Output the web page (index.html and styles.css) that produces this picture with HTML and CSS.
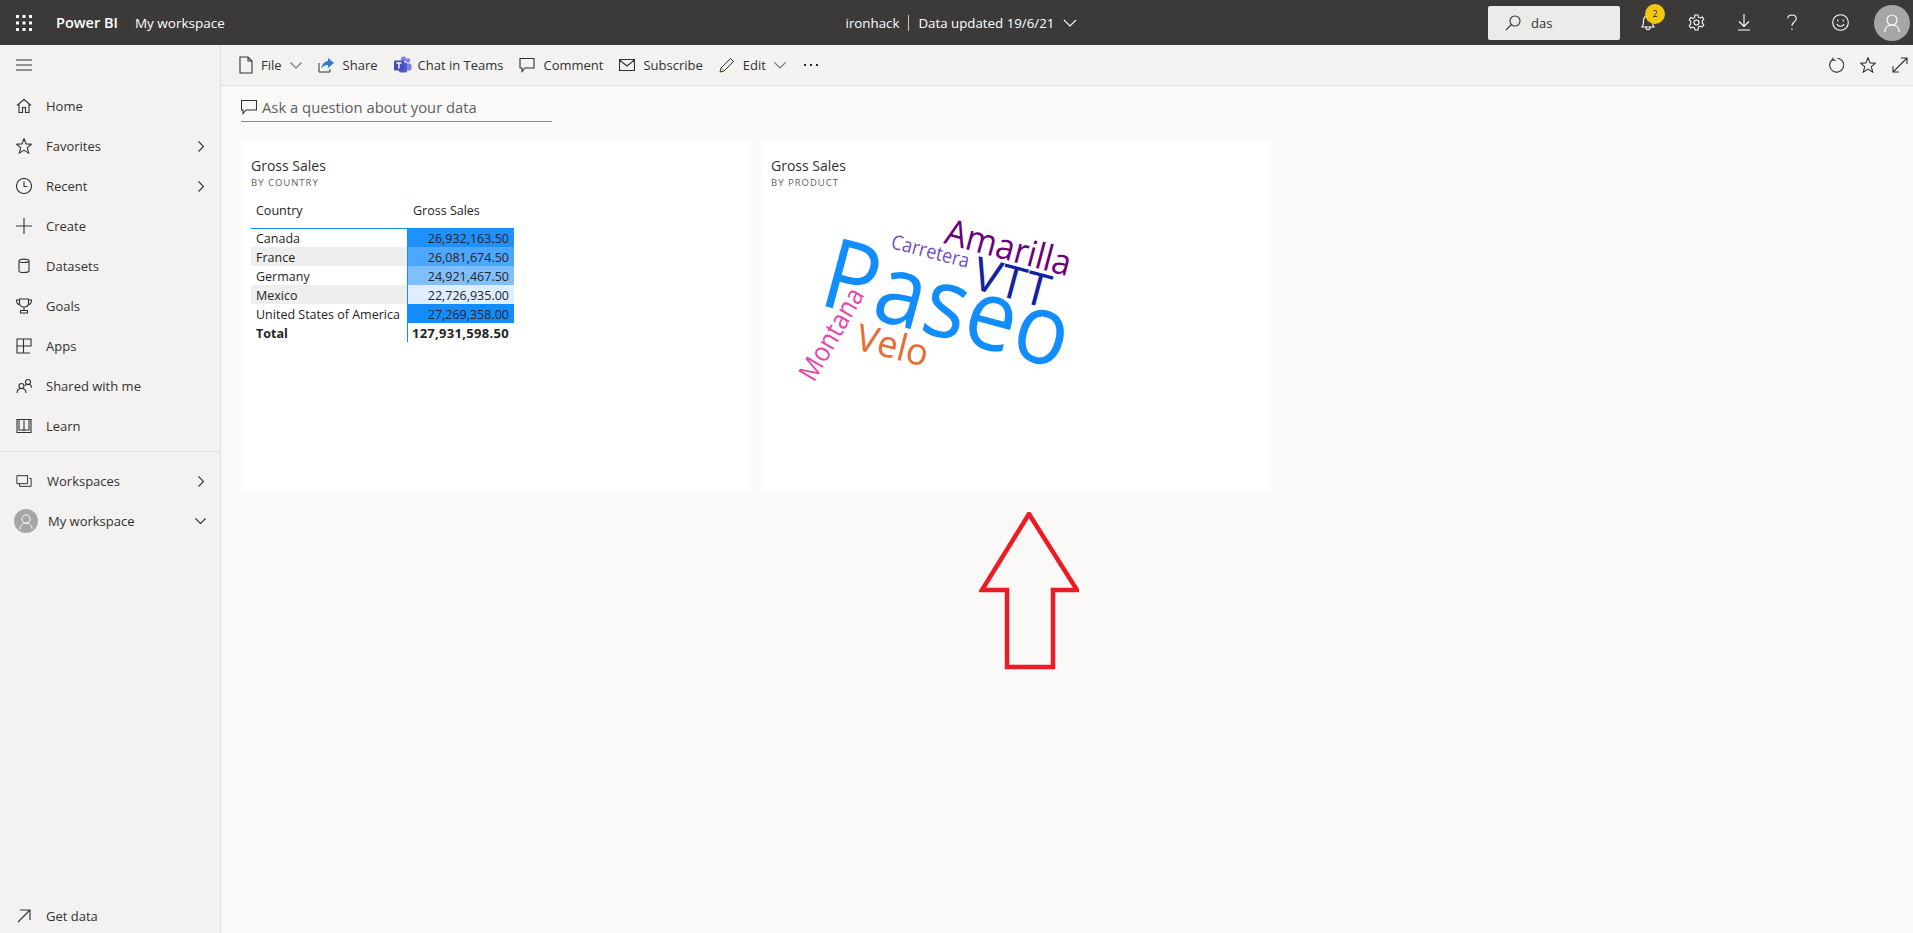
FILE: index.html
```html
<!DOCTYPE html>
<html>
<head>
  <meta charset="UTF-8">
  <title>ironhack - Power BI</title>
  <link rel="stylesheet" href="styles.css">
</head>
<body>
  <header class="topbar">
    <div class="top-left">
      <svg class="waffle" width="16" height="16" viewBox="0 0 16 16"><g fill="#fff"><rect x="0" y="0" width="3" height="3"/><rect x="6.500" y="0" width="3" height="3"/><rect x="13" y="0" width="3" height="3"/><rect x="0" y="6.500" width="3" height="3"/><rect x="6.500" y="6.500" width="3" height="3"/><rect x="13" y="6.500" width="3" height="3"/><rect x="0" y="13" width="3" height="3"/><rect x="6.500" y="13" width="3" height="3"/><rect x="13" y="13" width="3" height="3"/></g></svg>
      <span class="brand">Power BI</span>
      <span class="crumb">My workspace</span>
    </div>
    <div class="top-center">
      <span>ironhack</span>
      <span class="pipe"></span>
      <span>Data updated 19/6/21</span>
      <svg width="14" height="8" viewBox="0 0 14 8" class="line-w"><path d="M1 1l6 6 6-6"/></svg>
    </div>
    <div class="top-right">
      <div class="search">
        <svg width="16" height="16" viewBox="0 0 16 16" class="line-d"><circle cx="10" cy="6" r="5"/><path d="M6.500 9.500L.8 15.200"/></svg>
        <span>das</span>
      </div>
      <div class="top-icon bell">
        <svg width="14" height="17" viewBox="0 0 14 17" class="line-w"><path d="M1 13c1.500-1.500 1.500-3 1.500-6.500C2.500 3.500 4.500 1.500 7 1.500s4.500 2 4.500 5c0 3.500 0 5 1.500 6.500zM5 13.500c0 3 4 3 4 0"/></svg>
        <span class="badge">2</span>
      </div>
      <div class="top-icon">
        <svg width="17" height="17" viewBox="0 0 17 17" class="line-w"><circle cx="8.500" cy="8.500" r="2.500"/><path d="M7 1h3l.5 2.200 1.700.8 2-1.100 1.600 2.400-1.500 1.500v2.400l1.500 1.500-1.600 2.400-2-1.100-1.700.8L10 16H7l-.5-2.200-1.700-.8-2 1.100-1.600-2.400 1.500-1.500V7.300L1.200 5.800l1.600-2.400 2 1.100 1.700-.8z"/></svg>
      </div>
      <div class="top-icon">
        <svg width="12" height="17" viewBox="0 0 12 17" class="line-w"><path d="M6 0v12M1 7.500l5 5 5-5M0 16h12"/></svg>
      </div>
      <div class="top-icon">
        <svg width="10" height="17" viewBox="0 0 10 17" class="line-w"><path d="M.8 4.500C.8 2.300 2.700 1 5 1s4.200 1.500 4.200 3.700c0 3.300-4.200 3.300-4.200 7M5 14.500V16"/></svg>
      </div>
      <div class="top-icon">
        <svg width="17" height="17" viewBox="0 0 17 17" class="line-w"><circle cx="8.500" cy="8.500" r="7.800"/><path d="M4.800 10c1.500 3 5.900 3 7.400 0M5.800 5.500v2M11.200 5.500v2"/></svg>
      </div>
      <div class="avatar big">
        <svg width="16" height="18" viewBox="0 0 16 18" class="line-w"><circle cx="8" cy="6" r="5"/><path d="M.8 18c0-4.500 3-7 7.200-7s7.200 2.500 7.200 7"/></svg>
      </div>
    </div>
  </header>

  <div class="shell">
    <nav class="sidebar">
      <div class="hamburger">
        <svg width="16" height="12" viewBox="0 0 16 12" class="line-d"><path d="M0 1h16M0 6h16M0 11h16"/></svg>
      </div>
      <a class="nav-item"><svg width="16" height="16" viewBox="0 0 16 16" class="line-d"><path d="M1 7.500L8 1.500l7 6M3 6v8.500h3.500V9.500h3v5H13V6"/></svg><span>Home</span></a>
      <a class="nav-item"><svg width="16" height="16" viewBox="0 0 16 16" class="line-d"><path d="M8 .8l2.100 5.100 5.400.3-4.200 3.500 1.400 5.400L8 12.100l-4.700 3 1.400-5.400L.5 6.200l5.400-.3z"/></svg><span>Favorites</span><svg class="chev" width="6" height="11" viewBox="0 0 6 11"><path d="M.5.500l5 5-5 5"/></svg></a>
      <a class="nav-item"><svg width="16" height="16" viewBox="0 0 16 16" class="line-d"><circle cx="8" cy="8" r="7.500"/><path d="M8 3.500V8.500h3.500"/></svg><span>Recent</span><svg class="chev" width="6" height="11" viewBox="0 0 6 11"><path d="M.5.500l5 5-5 5"/></svg></a>
      <a class="nav-item"><svg width="16" height="16" viewBox="0 0 16 16" class="line-d"><path d="M8 0v16M0 8h16"/></svg><span>Create</span></a>
      <a class="nav-item"><svg width="16" height="16" viewBox="0 0 16 16" class="line-d"><path d="M3 3v10c0 2 10 2 10 0V3c0-2.500-10-2.500-10 0c0 2 10 2 10 0"/></svg><span>Datasets</span></a>
      <a class="nav-item"><svg width="16" height="16" viewBox="0 0 16 16" class="line-d"><path d="M3.500 1h9v4c0 2.500-2 4-4.500 4s-4.500-1.500-4.500-4zM3.500 2H.5c0 3 1 4.500 3.500 4.800M12.500 2h3c0 3-1 4.500-3.500 4.800M8 9v3M4.500 12.500h7v2.500h-7z"/></svg><span>Goals</span></a>
      <a class="nav-item"><svg width="16" height="16" viewBox="0 0 16 16" class="line-d"><path d="M1 1h6.500v14H1zM1 8h14V1H7.500M7.500 15H14"/></svg><span>Apps</span></a>
      <a class="nav-item"><svg width="16" height="16" viewBox="0 0 16 16" class="line-d"><circle cx="5.500" cy="8" r="2.500"/><circle cx="12" cy="4" r="2.500"/><path d="M1 15c0-3 2-4.500 4.500-4.500S10 12 10 15M9 7.500c1-1 2-1.200 3-1.200 2 0 3.500 1.200 3.500 3.500"/></svg><span>Shared with me</span></a>
      <a class="nav-item"><svg width="16" height="16" viewBox="0 0 16 16" class="line-d"><path d="M1 1.500h14v13H1zM3 1.500v10.500h4c.5 0 1 .5 1 1 0-.5.5-1 1-1h4V1.500M8 2.500V13"/></svg><span>Learn</span></a>
      <div class="nav-rule"></div>
      <a class="nav-item ws"><svg width="16" height="16" viewBox="0 0 18 16" class="line-d"><path d="M1 2h12v9H1zM15 5h2v9H4v-3"/></svg><span>Workspaces</span><svg class="chev" width="6" height="11" viewBox="0 0 6 11"><path d="M.5.500l5 5-5 5"/></svg></a>
      <a class="nav-item my-ws">
        <div class="avatar small"><svg width="14" height="15" viewBox="0 0 16 18" class="line-w"><circle cx="8" cy="6" r="5"/><path d="M.8 18c0-4.500 3-7 7.200-7s7.200 2.500 7.200 7"/></svg></div>
        <span>My workspace</span>
        <svg class="chev down" width="11" height="6" viewBox="0 0 11 6"><path d="M.5.500l5 5 5-5"/></svg>
      </a>
      <a class="nav-item get-data"><svg width="16" height="16" viewBox="0 0 16 16" class="line-d"><path d="M2 14L14 2M4 2h10v10"/></svg><span>Get data</span></a>
    </nav>

    <main class="main">
      <div class="toolbar">
        <a class="tool"><svg width="14" height="18" viewBox="0 0 14 18" class="line-d"><path d="M1 1h8l4 4v12H1zM9 1v4h4"/></svg><span>File</span><svg class="tool-chev" width="12" height="7" viewBox="0 0 12 7"><path d="M.5.500L6 6 11.500.500"/></svg></a>
        <a class="tool"><svg width="17" height="16" viewBox="0 0 17 16"><path d="M1 6v9h11v-3" fill="none" stroke="#323130"/><path d="M10 1l6 5-6 5V8C7 8 5 9 3.500 11.500 4 7 6.500 4.500 10 4z" fill="#2b7cd3"/></svg><span>Share</span></a>
        <a class="tool teams"><svg width="18" height="18" viewBox="0 0 18 18"><circle cx="14" cy="4.500" r="2.200" fill="#7b83eb"/><circle cx="9.500" cy="3" r="2.600" fill="#7b83eb"/><rect x="11" y="7.500" width="6.500" height="7" rx="2" fill="#7b83eb"/><rect x="5" y="6.500" width="8" height="10" rx="1.500" fill="#5059c9"/><rect x="0" y="4.500" width="10" height="10" rx="1" fill="#464eb8"/><path d="M2.500 7h5M5 7v5.500" stroke="#fff" stroke-width="1.400" fill="none"/></svg><span>Chat in Teams</span></a>
        <a class="tool"><svg width="16" height="16" viewBox="0 0 16 16" class="line-d"><path d="M1 1.500h14V11H6l-3 3.500V11H1z"/></svg><span>Comment</span></a>
        <a class="tool"><svg width="16" height="12" viewBox="0 0 16 12" class="line-d"><path d="M.5.500h15v11H.5zM.5 1L8 7l7.500-6"/></svg><span>Subscribe</span></a>
        <a class="tool"><svg width="16" height="16" viewBox="0 0 16 16"><path d="M1 15l1-4L11.500 1.500l3 3L5 14z" fill="none" stroke="#323130"/><path d="M2.500 11l2.500 2.500" stroke="#c19c00"/></svg><span>Edit</span><svg class="tool-chev" width="12" height="7" viewBox="0 0 12 7"><path d="M.5.500L6 6 11.500.500"/></svg></a>
        <svg class="more" width="15" height="3" viewBox="0 0 15 3"><g fill="#323130"><rect x="0" y="0" width="2" height="2"/><rect x="6" y="0" width="2" height="2"/><rect x="12" y="0" width="2" height="2"/></g></svg>
        <div class="tool-right">
          <svg width="16" height="16" viewBox="0 0 16 16" class="line-d"><path d="M5 2.200A7 7 0 1 0 9.500 1.200M5 .5v2.800h3"/></svg>
          <svg width="16" height="16" viewBox="0 0 16 16" class="line-d"><path d="M8 .8l2.100 5.100 5.400.3-4.200 3.500 1.400 5.400L8 12.100l-4.700 3 1.400-5.400L.5 6.200l5.400-.3z"/></svg>
          <svg width="16" height="16" viewBox="0 0 16 16" class="line-d"><path d="M1 15L15 1M9 1h6v6M1 9v6h6"/></svg>
        </div>
      </div>

      <div class="content">
        <div class="ask">
          <svg width="16" height="16" viewBox="0 0 16 16" class="line-d"><path d="M.5 1.500h15V11H5l-3 3.500V11H.5z"/></svg>
          <span>Ask a question about your data</span>
        </div>

        <div class="tiles">
          <section class="tile">
            <h2>Gross Sales</h2>
            <h3>BY COUNTRY</h3>
            <table class="matrix">
              <thead>
                <tr><th>Country</th><th class="num-head">Gross Sales</th></tr>
              </thead>
              <tbody>
                <tr><td>Canada</td><td class="num c1">26,932,163.50</td></tr>
                <tr class="zebra"><td>France</td><td class="num c2">26,081,674.50</td></tr>
                <tr><td>Germany</td><td class="num c3">24,921,467.50</td></tr>
                <tr class="zebra"><td>Mexico</td><td class="num c4">22,726,935.00</td></tr>
                <tr><td>United States of America</td><td class="num c5">27,269,358.00</td></tr>
                <tr class="total"><td>Total</td><td class="num">127,931,598.50</td></tr>
              </tbody>
            </table>
          </section>

          <section class="tile">
            <h2>Gross Sales</h2>
            <h3>BY PRODUCT</h3>
            <svg class="cloud" width="510" height="240" viewBox="761 190 510 240">
              <text transform="translate(819 303) rotate(15)" font-size="98" textLength="252" lengthAdjust="spacingAndGlyphs" fill="#118dff">Paseo</text>
              <text transform="translate(945 242) rotate(15)" font-size="36" textLength="129" lengthAdjust="spacingAndGlyphs" fill="#6b007b">Amarilla</text>
              <text transform="translate(892 247) rotate(14.500)" font-size="20" textLength="80" lengthAdjust="spacingAndGlyphs" fill="#744ec2">Carretera</text>
              <text transform="translate(972 287) rotate(15)" font-size="46" textLength="78" lengthAdjust="spacingAndGlyphs" fill="#12239e">VTT</text>
              <text transform="translate(856 348) rotate(14)" font-size="37" textLength="73" lengthAdjust="spacingAndGlyphs" fill="#e66c37">Velo</text>
              <text transform="translate(816 382) rotate(-60)" font-size="27" textLength="102" lengthAdjust="spacingAndGlyphs" fill="#e645ab">Montana</text>
            </svg>
          </section>
        </div>
      </div>
    </main>
  </div>

  <svg class="red-arrow" width="100" height="160" viewBox="0 0 100 160"><path d="M50 2l48 76H74v77H28V78H3z" fill="none" stroke="#ed1c24" stroke-width="4.500"/></svg>
</body>
</html>
```

FILE: styles.css
```css
/* colours
top bar : #3b3a39
nav + toolbar : #f3f2f1
canvas : #faf9f8
*/
* {
  box-sizing: border-box;
}
html, body {
  height: 100%;
}
body {
  margin: 0;
  display: flex;
  flex-direction: column;
  overflow: hidden;
  font-family: "Open Sans", "Liberation Sans", sans-serif;
  font-size: 13px;
  color: #323130;
  background-color: #faf9f8;
}
svg {
  display: block;
  flex: none;
}
.line-d, .line-w, .chev, .tool-chev {
  fill: none;
  stroke-width: 1.1;
}
.line-d, .chev, .tool-chev {
  stroke: #323130;
}
.line-w {
  stroke: #fff;
}
.tool-chev {
  stroke: #797775;
}

/* top bar */
.topbar {
  height: 45px;
  flex: none;
  display: grid;
  grid-template-columns: 1fr auto 1fr;
  align-items: center;
  background-color: #3b3a39;
  color: #fff;
}
.top-left {
  display: flex;
  align-items: center;
  padding-left: 16px;
}
.brand {
  margin-left: 24px;
  font-weight: 600;
  font-size: 14.5px;
}
.crumb {
  margin-left: 17px;
  font-size: 13.5px;
}
.top-center {
  display: flex;
  align-items: center;
  gap: 9px;
  padding-left: 10px;
  font-size: 13.3px;
}
.pipe {
  width: 1px;
  height: 16px;
  background-color: #c8c6c4;
}
.top-right {
  display: flex;
  align-items: center;
  justify-content: flex-end;
  padding-right: 3px;
}
.search {
  width: 132px;
  height: 34px;
  margin-right: 4px;
  padding-left: 17px;
  display: flex;
  align-items: center;
  gap: 10px;
  border-radius: 2px;
  background-color: #edebe9;
  color: #323130;
}
.top-icon {
  width: 48px;
  display: flex;
  justify-content: center;
  position: relative;
}
.bell .badge {
  position: absolute;
  top: -10px;
  left: 21px;
  width: 20px;
  height: 20px;
  border-radius: 50%;
  background-color: #f2c80f;
  color: #252423;
  font-size: 9px;
  line-height: 20px;
  text-align: center;
}
.avatar {
  display: flex;
  align-items: center;
  justify-content: center;
  border-radius: 50%;
  background-color: #a6a6a6;
}
.avatar.big {
  width: 36px;
  height: 36px;
  margin-left: 10px;
}
.avatar.small {
  width: 24px;
  height: 24px;
  flex: none;
}

/* left nav */
.shell {
  flex: 1;
  display: flex;
  min-height: 0;
}
.sidebar {
  width: 221px;
  flex: none;
  display: flex;
  flex-direction: column;
  background-color: #f3f2f1;
  border-right: 1px solid #e1dfdd;
}
.hamburger {
  height: 41px;
  padding-left: 16px;
  padding-bottom: 1px;
  display: flex;
  align-items: center;
}
.nav-item {
  height: 40px;
  flex: none;
  padding: 0 14px 0 16px;
  display: flex;
  align-items: center;
  gap: 14px;
}
.nav-item .chev {
  margin-left: auto;
  margin-right: 2px;
}
.nav-item .chev.down {
  margin-right: 0;
}
.nav-rule {
  height: 1px;
  margin-top: 5px;
  margin-bottom: 9px;
  background-color: #e1dfdd;
}
.ws {
  gap: 15px;
}
.my-ws {
  gap: 10px;
  padding-left: 14px;
}
.get-data {
  margin-top: auto;
  margin-bottom: -3px;
}

/* toolbar */
.main {
  flex: 1;
  min-width: 0;
  display: flex;
  flex-direction: column;
}
.toolbar {
  height: 41px;
  flex: none;
  padding-left: 18px;
  padding-right: 5px;
  display: flex;
  align-items: center;
  gap: 16px;
  background-color: #f3f2f1;
  border-bottom: 1px solid #e1dfdd;
}
.tool {
  display: flex;
  align-items: center;
  gap: 8px;
}
.tool.teams {
  gap: 6px;
}
.more {
  margin-left: 2px;
}
.tool-right {
  margin-left: auto;
  display: flex;
  align-items: center;
  gap: 16px;
}

/* canvas */
.content {
  flex: 1;
  padding: 12px 20px;
}
.ask {
  width: 311px;
  height: 24px;
  padding-bottom: 5px;
  display: flex;
  align-items: center;
  gap: 5px;
  font-size: 14.8px;
  color: #605e5c;
  border-bottom: 1px solid #8a8886;
}
.tiles {
  margin-top: 19px;
  display: flex;
  gap: 10px;
}
.tile {
  width: 510px;
  height: 350px;
  padding: 14px 10px 0;
  background-color: #fff;
}
.tile h2 {
  margin: 0;
  font-size: 14px;
  font-weight: 400;
  line-height: 21px;
}
.tile h3 {
  margin: 0;
  font-size: 9.5px;
  font-weight: 400;
  line-height: 14px;
  letter-spacing: 1px;
  color: #605e5c;
}
.cloud {
  margin-left: -12px;
  margin-top: 1px;
}

/* matrix visual */
.matrix {
  margin-top: 12px;
  border-collapse: collapse;
  table-layout: fixed;
  width: 263px;
  font-size: 12.5px;
  color: #252423;
}
.matrix th {
  height: 26px;
  padding: 0 5px;
  font-weight: 400;
  text-align: left;
  border-bottom: 1px solid #118dff;
  vertical-align: top;
}
.matrix th:first-child, .matrix td:first-child {
  width: 156px;
}
.matrix td {
  height: 19px;
  padding: 1px 5px 0;
  white-space: nowrap;
}
.matrix .num {
  text-align: right;
  border-left: 1px solid #118dff;
}
.matrix .num-head {
  padding-left: 6px;
}
.zebra td:first-child {
  background-color: #eeeeee;
}
.c1 { background-color: #1f90ff; }
.c2 { background-color: #4da6ff; }
.c3 { background-color: #80bfff; }
.c4 { background-color: #deeeff; }
.c5 { background-color: #118dff; }
.total td {
  font-weight: 700;
}
.matrix .total .num {
  padding-left: 0;
  font-size: 13px;
  letter-spacing: .3px;
}

/* annotation drawn over the shot */
.red-arrow {
  position: absolute;
  left: 979px;
  top: 512px;
}
```
